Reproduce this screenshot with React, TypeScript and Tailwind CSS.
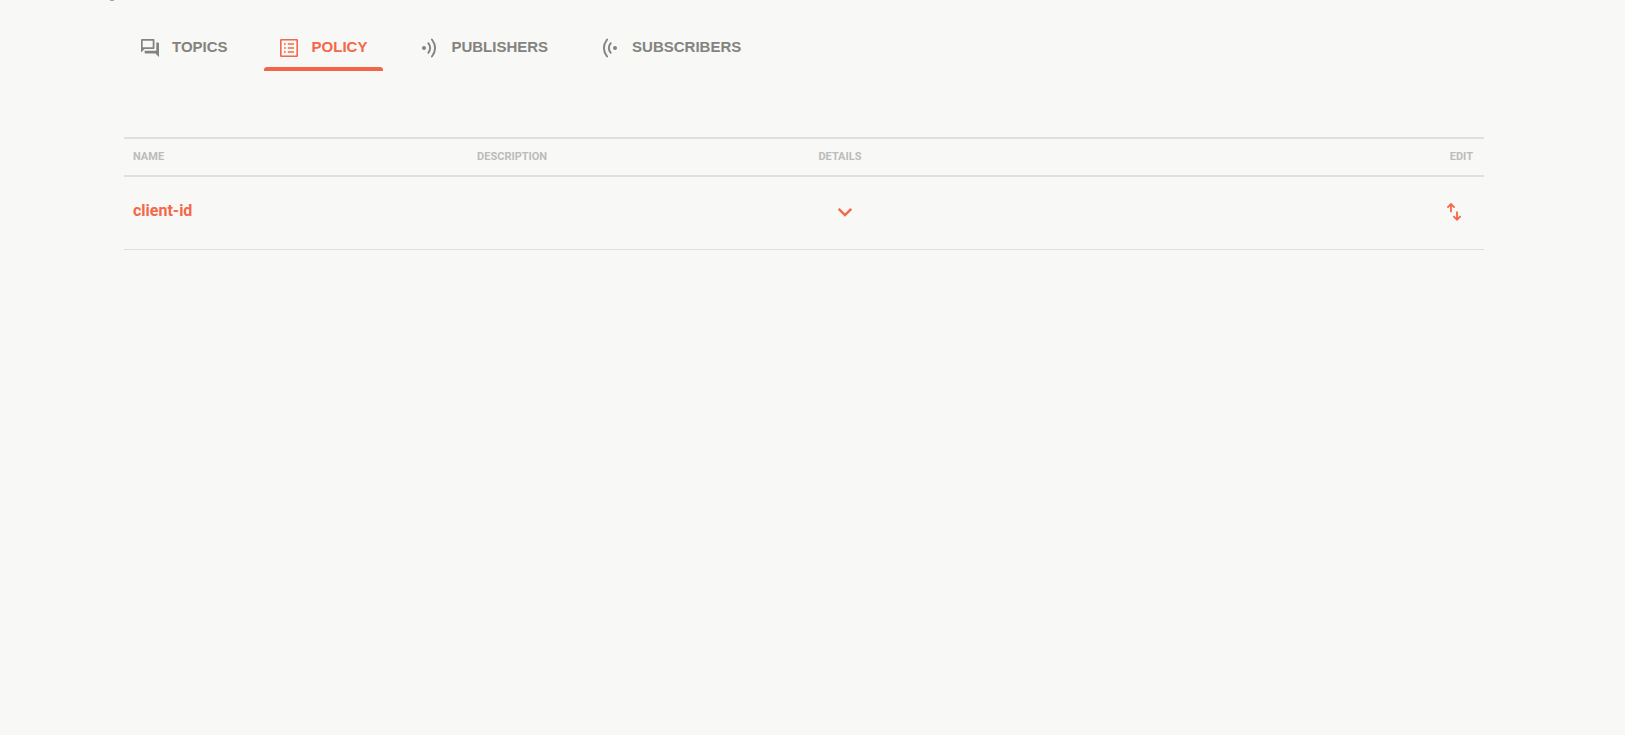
import type { ReactNode } from "react";

const iconClass = "h-5 w-5 shrink-0";

function TopicsIcon() {
  return (
    <svg className={iconClass} viewBox="-1 0 20 20" fill="currentColor" aria-hidden="true">
      <path
        fillRule="evenodd"
        d="M.9 1H12.6a.9.9 0 0 1 .9.9V10a.9.9 0 0 1-.9.9H3.6L0 14.500V1.900A.9.9 0 0 1 .9 1ZM1.700 2.700V9.200H11.700V2.700Z"
      />
      <path d="M15.300 4.600H17.100a.9.9 0 0 1 .9.9V19L14.400 15.400H4.500a.9.9 0 0 1-.9-.9V12.700H15.300Z" />
    </svg>
  );
}

function PolicyIcon() {
  return (
    <svg className={iconClass} viewBox="0 0 20 20" fill="currentColor" aria-hidden="true">
      <path
        fillRule="evenodd"
        d="M1.200 1H16.800A1.200 1.200 0 0 1 18 2.200V17.800a1.200 1.200 0 0 1-1.200 1.200H1.200A1.200 1.200 0 0 1 0 17.800V2.200A1.200 1.200 0 0 1 1.200 1ZM1.600 2.600V17.400H16.400V2.600Z"
      />
      <path d="M4 5.200h1.700v1.500H4ZM4 9.200h1.700v1.500H4ZM4 13.200h1.700v1.500H4ZM7.800 5.200H14v1.500H7.800ZM7.800 9.200H14v1.500H7.800ZM7.800 13.200H14v1.500H7.800Z" />
    </svg>
  );
}

function WavesIcon({ flipped = false }: { flipped?: boolean }) {
  return (
    <svg
      className={iconClass}
      viewBox="0 0 20 20"
      fill="none"
      stroke="currentColor"
      strokeWidth="1.900"
      strokeLinecap="round"
      aria-hidden="true"
    >
      <g transform={flipped ? "translate(19 0) scale(-1 1)" : "translate(1 0)"}>
        <circle cx="4" cy="10" r="2" fill="currentColor" stroke="none" />
        <path d="M8.300 5.200Q12 10 8.300 14.800M11.900 1.500Q18.300 10 11.900 18.500" />
      </g>
    </svg>
  );
}

const tabs: { label: string; icon: ReactNode; active?: boolean }[] = [
  { label: "TOPICS", icon: <TopicsIcon /> },
  { label: "POLICY", icon: <PolicyIcon />, active: true },
  { label: "PUBLISHERS", icon: <WavesIcon /> },
  { label: "SUBSCRIBERS", icon: <WavesIcon flipped /> },
];

const policies = [{ name: "client-id", description: "" }];

export default function App() {
  return (
    <div className="min-h-screen bg-[#f8f8f6] pr-[141px] pl-[124px] font-[Roboto,sans-serif]">
      <div className="-ml-3.5 h-7">
        <div className="h-px w-1 bg-[#a6a6a4]" />
      </div>

      <div role="tablist" className="flex gap-5">
        {tabs.map((tab) => (
          <button
            key={tab.label}
            type="button"
            role="tab"
            aria-selected={!!tab.active}
            className={
              tab.active
                ? "flex flex-col text-[#f46748]"
                : "flex flex-col text-[#83837f]"
            }
          >
            <span className="flex h-[39px] items-center gap-3 px-4 font-['Liberation_Sans',Arial,sans-serif] text-[15px] font-bold">
              {tab.icon}
              {tab.label}
            </span>
            <span className={tab.active ? "h-1 w-full rounded-t-[3px] bg-[#f16646]" : "h-1 w-full"} />
          </button>
        ))}
      </div>

      <table className="mt-[66px] w-full table-fixed border-collapse text-left">
        <colgroup>
          <col className="w-[25.3%]" />
          <col className="w-[25.1%]" />
          <col className="w-[25.1%]" />
          <col />
        </colgroup>
        <thead>
          <tr className="h-[38px] border-y-2 border-[#dfdfdc] text-[11px] font-bold text-[#bcbcba]">
            <th className="px-[9px]">NAME</th>
            <th className="px-[9px]">DESCRIPTION</th>
            <th className="px-[9px]">DETAILS</th>
            <th className="px-[11px] text-right">EDIT</th>
          </tr>
        </thead>
        <tbody>
          {policies.map((policy) => (
            <tr key={policy.name} className="h-[73px] border-b border-[#dfdfdc] text-[#f46748]">
              <td className="px-[9px] pb-1 text-base font-bold">{policy.name}</td>
              <td className="px-[9px]">{policy.description}</td>
              <td className="pb-0.5 pl-[18px]">
                <button type="button" aria-label="Show details" className="block p-2">
                  <svg className="h-5 w-5" viewBox="0 0 20 20" fill="none" stroke="currentColor" strokeWidth="2.400" aria-hidden="true">
                    <path d="M3.700 6.800 10 13.100l6.300-6.300" />
                  </svg>
                </button>
              </td>
              <td className="pr-3 pb-0.5">
                <button type="button" aria-label="Edit policy" className="ml-auto block p-2">
                  <svg className="h-5 w-5" viewBox="0 0 20 20" fill="none" stroke="currentColor" strokeWidth="1.800" aria-hidden="true">
                    <path d="M7 10.300V2.200M3.400 5.700 7 2.100l3.600 3.600M13 9.500v8M9.400 14.100l3.600 3.600 3.600-3.600" />
                  </svg>
                </button>
              </td>
            </tr>
          ))}
        </tbody>
      </table>
    </div>
  );
}
